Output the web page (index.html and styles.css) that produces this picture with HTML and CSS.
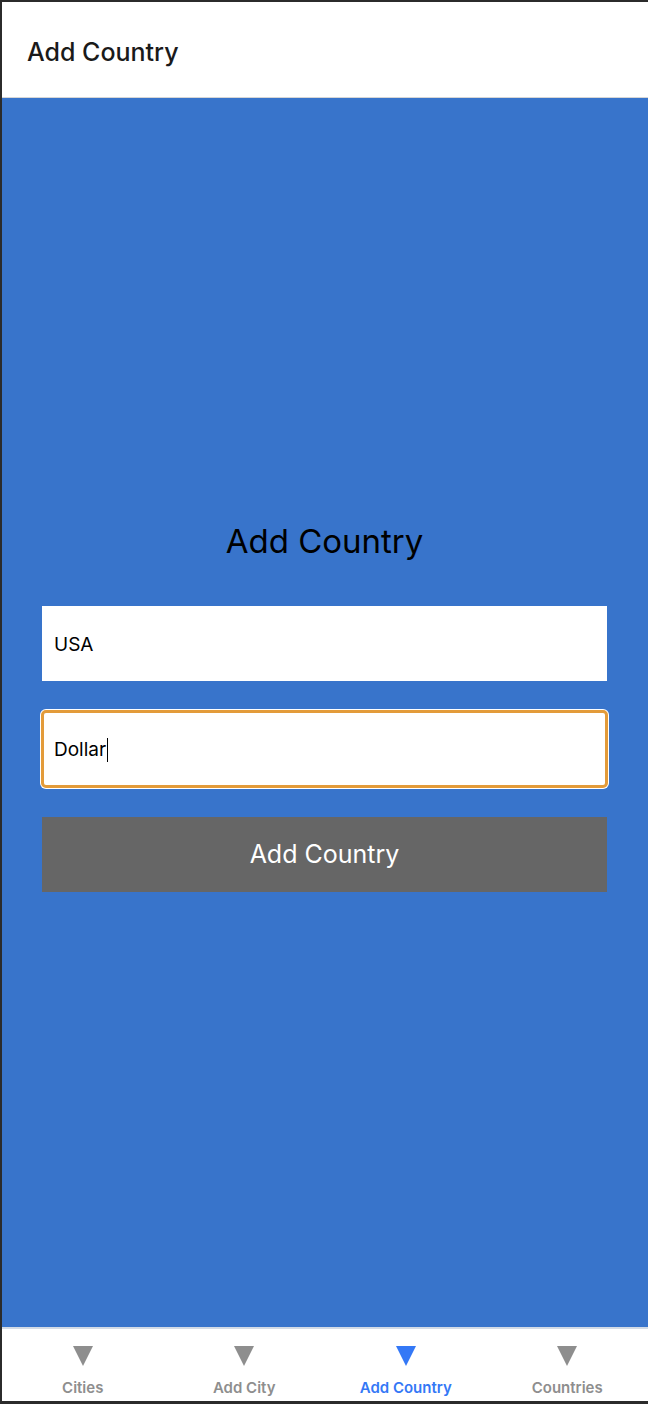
FILE: index.html
```html
<!DOCTYPE html>
<html>
<head>
<meta charset="utf-8">
<link rel="stylesheet" href="styles.css">
</head>
<body>
<div class="frame">
  <header class="header"><h1 class="header-title">Add Country</h1></header>
  <main class="main">
    <div class="form">
      <h2 class="form-title">Add Country</h2>
      <div class="field">USA</div>
      <div class="field field-focus">Dollar<span class="caret"></span></div>
      <button class="btn">Add Country</button>
    </div>
  </main>
  <nav class="tabs">
    <div class="tab"><span class="tri"></span><span class="tab-label">Cities</span></div>
    <div class="tab"><span class="tri"></span><span class="tab-label">Add City</span></div>
    <div class="tab active"><span class="tri"></span><span class="tab-label">Add Country</span></div>
    <div class="tab"><span class="tri"></span><span class="tab-label">Countries</span></div>
  </nav>
</div>
</body>
</html>
```
FILE: styles.css
```css
* { box-sizing: border-box; }
html, body { margin: 0; padding: 0; background: #2b2b2b; }
body { font-family: Inter, "Noto Sans", sans-serif; }
.frame {
  width: 648px;
  height: 1404px;
  padding: 2px 0 3px 2px;
  display: flex;
  flex-direction: column;
  background: #2b2b2b;
}
.header {
  height: 96px;
  background: #fff;
  border-bottom: 1px solid #d6d6d6;
  display: flex;
  align-items: center;
  padding-left: 25px;
  flex-shrink: 0;
}
.header-title {
  margin: 0;
  font-size: 25px;
  font-weight: 500;
  color: #1a1a1a;
  padding-top: 4px;
}
.main {
  flex: 1;
  background: #3874cb;
  display: flex;
  flex-direction: column;
  justify-content: center;
  padding: 0 40px 14px 39px;
}
.form {
  display: flex;
  flex-direction: column;
}
.form-title {
  margin: 0 0 44px;
  text-align: center;
  font-size: 33px;
  font-weight: 400;
  color: #000;
  line-height: 42px;
}
.field {
  height: 75px;
  background: #fff;
  margin: 0 1px 29px;
  display: flex;
  align-items: center;
  padding-left: 12px;
  padding-top: 2px;
  font-size: 19px;
  color: #000;
}
.field-focus {
  margin: 0 0 29px;
  height: 78px;
  border: 3px solid #e39b3a;
  border-radius: 5px;
  box-shadow: 0 0 0 1px #fff;
  padding-left: 10px;
}
.caret {
  display: inline-block;
  width: 1px;
  height: 24px;
  background: #000;
  margin-left: 1px;
}
.btn {
  height: 75px;
  margin: 0 1px;
  background: #666666;
  border: 0;
  color: #fff;
  font-family: inherit;
  font-size: 25px;
  font-weight: 400;
  padding: 0;
}
.tabs {
  height: 74px;
  background: #fff;
  border-top: 2px solid #d3dbe6;
  display: flex;
  flex-shrink: 0;
}
.tab {
  flex: 1;
  display: flex;
  flex-direction: column;
  align-items: center;
  padding-top: 17px;
}
.tri {
  width: 0;
  height: 0;
  border-left: 10px solid transparent;
  border-right: 10px solid transparent;
  border-top: 20px solid #8e8e8e;
}
.tab-label {
  margin-top: 13px;
  font-size: 15px;
  font-weight: 600;
  color: #8e8e8e;
  line-height: 17px;
}
.active .tri { border-top-color: #3478f6; }
.active .tab-label { color: #3478f6; }
```
